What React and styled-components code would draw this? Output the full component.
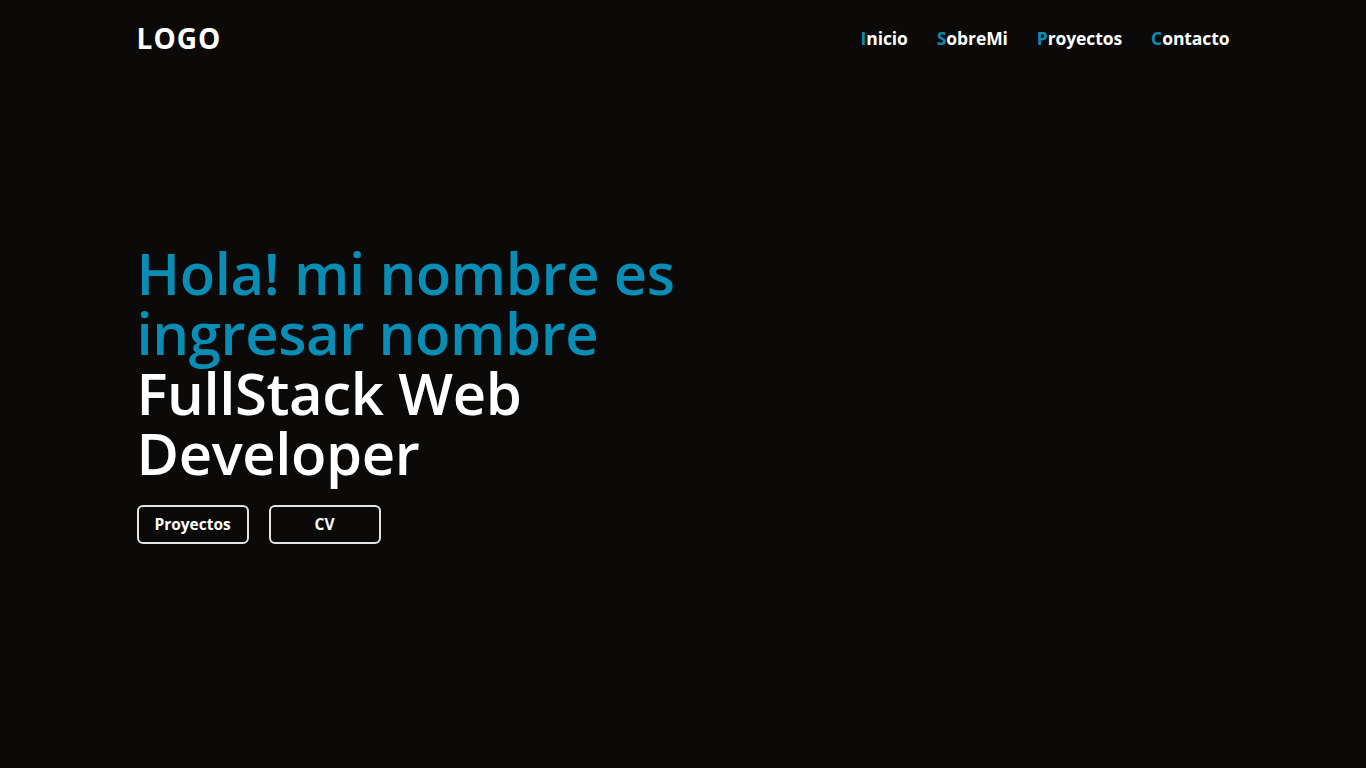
import React from "react";
import styled, { createGlobalStyle } from "styled-components";

const Global = createGlobalStyle`
  * { box-sizing: border-box; margin: 0; padding: 0; }
  html, body { background: #0b0a09; }
  body { font-family: "Open Sans", "Noto Sans", sans-serif; color: #fff; }
`;

const Page = styled.div`
  min-height: 768px;
  background: #0b0a09;
`;

const Container = styled.div`
  width: 80%;
  margin: 0 auto;
`;

const Header = styled.header`
  display: flex;
  align-items: center;
  justify-content: space-between;
  height: 76px;
`;

const Logo = styled.div`
  font-size: 28px;
  font-weight: 700;
  letter-spacing: 1px;
  color: #fff;
`;

const Nav = styled.nav`
  display: flex;
  gap: 29px;
`;

const NavLink = styled.a`
  font-size: 17.5px;
  font-weight: 700;
  color: #fff;
  text-decoration: none;
  letter-spacing: -0.1px;
  span { color: #0a8db5; }
`;

const Hero = styled.section`
  padding-top: 167px;
`;

const Title = styled.h1`
  max-width: 560px;
  font-size: 58px;
  font-weight: 600;
  line-height: 60px;
  color: ${(p) => p.$color};
  letter-spacing: -0.4px;
`;

const Buttons = styled.div`
  display: flex;
  gap: 20px;
  margin-top: 22px;
`;

const Button = styled.button`
  width: 112px;
  height: 39px;
  padding-bottom: 2px;
  border: 2px solid #e4e4e4;
  border-radius: 6px;
  background: transparent;
  color: #fff;
  font-family: inherit;
  font-size: 15.5px;
  font-weight: 700;
  cursor: pointer;
`;

const links = ["Inicio", "SobreMi", "Proyectos", "Contacto"];

export default function App() {
  return (
    <Page>
      <Global />
      <Container>
        <Header>
          <Logo>LOGO</Logo>
          <Nav>
            {links.map((l) => (
              <NavLink key={l} href="#">
                <span>{l[0]}</span>
                {l.slice(1)}
              </NavLink>
            ))}
          </Nav>
        </Header>
        <Hero>
          <Title $color="#0a8db5">Hola! mi nombre es ingresar nombre</Title>
          <Title $color="#ffffff">FullStack Web Developer</Title>
          <Buttons>
            <Button>Proyectos</Button>
            <Button>CV</Button>
          </Buttons>
        </Hero>
      </Container>
    </Page>
  );
}
